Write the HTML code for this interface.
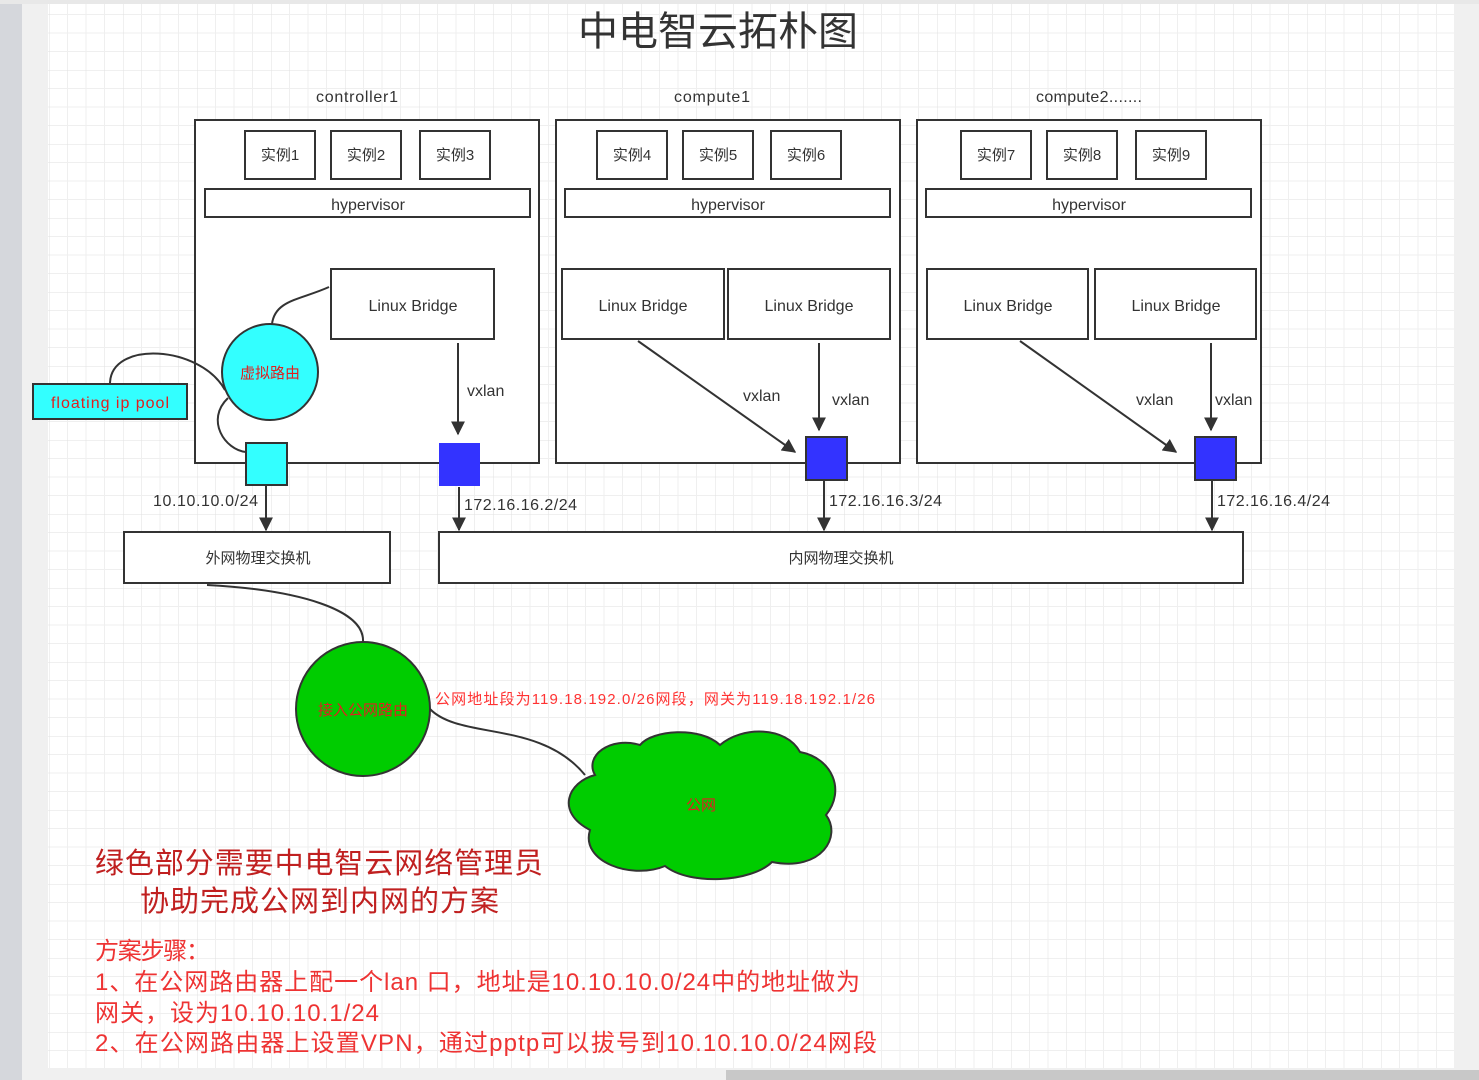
<!DOCTYPE html>
<html><head><meta charset="utf-8"><style>
html,body{margin:0;padding:0;background:#fff;}
svg{display:block}
text{font-family:"Liberation Sans","Noto Sans CJK SC",sans-serif;}
</style></head><body>
<svg width="1479" height="1080" viewBox="0 0 1479 1080" xmlns="http://www.w3.org/2000/svg">
<defs>
<pattern id="g" x="49" y="-4" width="74" height="74" patternUnits="userSpaceOnUse">
<path d="M18.5 0V74M37 0V74M55.5 0V74M0 18.5H74M0 37H74M0 55.5H74" stroke="#efefef" stroke-width="1" fill="none"/>
<path d="M0 0V74M0 0H74" stroke="#e2e2e2" stroke-width="1" fill="none"/>
</pattern>
<marker id="a" viewBox="0 0 10 10" refX="9" refY="5" markerWidth="7" markerHeight="7" orient="auto"><path d="M0 0L10 5L0 10z" fill="#333"/></marker>
</defs>
<rect width="1479" height="1080" fill="#f0f0f0"/>
<rect x="0" y="0" width="22" height="1080" fill="#d5d7dc"/>
<rect x="48" y="4" width="1406" height="1064" fill="#fff"/>
<rect x="48" y="4" width="1406" height="1064" fill="url(#g)"/>
<rect x="0" y="0" width="1479" height="4" fill="#e8e8e8"/>
<rect x="726" y="1070" width="753" height="10" fill="#c8c8c8"/>

<text x="718" y="45" font-size="40" fill="#333" text-anchor="middle">中电智云拓朴图</text>
<g font-size="16" fill="#333" text-anchor="middle">
<text x="357" y="102" textLength="82">controller1</text>
<text x="712" y="102" textLength="76">compute1</text>
<text x="1089" y="102" textLength="106">compute2.......</text>
</g>
<g fill="#fff" stroke="#333" stroke-width="2">
<rect x="195" y="120" width="344" height="343"/>
<rect x="556" y="120" width="344" height="343"/>
<rect x="917" y="120" width="344" height="343"/>
<rect x="245" y="131" width="70" height="48"/><rect x="331" y="131" width="70" height="48"/><rect x="420" y="131" width="70" height="48"/>
<rect x="597" y="131" width="70" height="48"/><rect x="683" y="131" width="70" height="48"/><rect x="771" y="131" width="70" height="48"/>
<rect x="961" y="131" width="70" height="48"/><rect x="1047" y="131" width="70" height="48"/><rect x="1136" y="131" width="70" height="48"/>
<rect x="205" y="189" width="325" height="28"/><rect x="565" y="189" width="325" height="28"/><rect x="926" y="189" width="325" height="28"/>
<rect x="331" y="269" width="163" height="70"/>
<rect x="562" y="269" width="162" height="70"/><rect x="728" y="269" width="162" height="70"/>
<rect x="927" y="269" width="161" height="70"/><rect x="1095" y="269" width="161" height="70"/>
<rect x="124" y="532" width="266" height="51"/>
<rect x="439" y="532" width="804" height="51"/>
</g>
<g font-size="15" fill="#333" text-anchor="middle">
<text x="280" y="160">实例1</text><text x="366" y="160">实例2</text><text x="455" y="160">实例3</text>
<text x="632" y="160">实例4</text><text x="718" y="160">实例5</text><text x="806" y="160">实例6</text>
<text x="996" y="160">实例7</text><text x="1082" y="160">实例8</text><text x="1171" y="160">实例9</text>
</g>
<g font-size="16" fill="#333" text-anchor="middle">
<text x="368" y="210">hypervisor</text><text x="728" y="210">hypervisor</text><text x="1089" y="210">hypervisor</text>
<text x="413" y="311">Linux Bridge</text>
<text x="643" y="311">Linux Bridge</text><text x="809" y="311">Linux Bridge</text>
<text x="1008" y="311">Linux Bridge</text><text x="1176" y="311">Linux Bridge</text>
</g>
<g font-size="15" fill="#333" text-anchor="middle">
<text x="258" y="563">外网物理交换机</text>
<text x="841" y="563">内网物理交换机</text>
</g>
<g fill="none" stroke="#333" stroke-width="2">
<path d="M329 287C300 300 275 300 272 324"/>
<path d="M110 384C110 340 200 345 225 390"/>
<path d="M228 398C205 420 225 450 246 452"/>
<path d="M207 585C300 590 365 610 363 642"/>
<path d="M430 709C460 740 540 720 585 775"/>
</g>
<g stroke="#333" stroke-width="2" marker-end="url(#a)">
<line x1="458" y1="343" x2="458" y2="434"/>
<line x1="638" y1="341" x2="795" y2="452"/>
<line x1="819" y1="343" x2="819" y2="430"/>
<line x1="1020" y1="341" x2="1176" y2="452"/>
<line x1="1211" y1="343" x2="1211" y2="430"/>
<line x1="266" y1="486" x2="266" y2="530"/>
<line x1="459" y1="487" x2="459" y2="530"/>
<line x1="824" y1="481" x2="824" y2="530"/>
<line x1="1212" y1="481" x2="1212" y2="530"/>
</g>
<g font-size="16" fill="#333">
<text x="467" y="396">vxlan</text>
<text x="743" y="401">vxlan</text><text x="832" y="405">vxlan</text>
<text x="1136" y="405">vxlan</text><text x="1215" y="405">vxlan</text>
<text x="153" y="506" textLength="105">10.10.10.0/24</text>
<text x="464" y="510" textLength="113">172.16.16.2/24</text>
<text x="829" y="506" textLength="113">172.16.16.3/24</text>
<text x="1217" y="506" textLength="113">172.16.16.4/24</text>
</g>
<circle cx="270" cy="372" r="48" fill="#33ffff" stroke="#333" stroke-width="2"/>
<text x="270" y="378" font-size="15" fill="#e02020" text-anchor="middle">虚拟路由</text>
<rect x="33" y="384" width="154" height="35" fill="#33ffff" stroke="#333" stroke-width="2"/>
<text x="110" y="408" font-size="16" fill="#e02020" text-anchor="middle" textLength="118">floating ip pool</text>
<rect x="246" y="443" width="41" height="42" fill="#33ffff" stroke="#333" stroke-width="2"/>
<rect x="439" y="443" width="41" height="43" fill="#3333ff"/>
<rect x="806" y="437" width="41" height="43" fill="#3333ff" stroke="#333" stroke-width="2"/>
<rect x="1195" y="437" width="41" height="43" fill="#3333ff" stroke="#333" stroke-width="2"/>
<circle cx="363" cy="709" r="67" fill="#00cc00" stroke="#333" stroke-width="2"/>
<text x="363" y="715" font-size="15" fill="#e02020" text-anchor="middle">接入公网路由</text>
<path d="M595 775C568 782 555 812 590 830C580 862 632 880 665 866C690 886 752 882 772 862C822 872 842 836 826 815C846 790 832 758 800 752C786 726 742 726 720 745C700 726 652 730 640 745C610 736 584 756 595 775Z" fill="#00cc00" stroke="#333" stroke-width="2"/>
<text x="701" y="810" font-size="15" fill="#e02020" text-anchor="middle">公网</text>
<text x="435" y="704" font-size="15" fill="#ff3333" textLength="440">公网地址段为119.18.192.0/26网段，网关为119.18.192.1/26</text>
<g fill="#c02020" font-size="29">
<text x="95" y="873" textLength="448">绿色部分需要中电智云网络管理员</text>
<text x="140" y="911" textLength="359">协助完成公网到内网的方案</text>
</g>
<g fill="#ee3333" font-size="24">
<text x="95" y="959" textLength="115">方案步骤：</text>
<text x="95" y="990" textLength="765">1、在公网路由器上配一个lan 口，地址是10.10.10.0/24中的地址做为</text>
<text x="95" y="1021" textLength="284">网关，设为10.10.10.1/24</text>
<text x="95" y="1051" textLength="782">2、在公网路由器上设置VPN，通过pptp可以拔号到10.10.10.0/24网段</text>
</g>
</svg>
</body></html>
